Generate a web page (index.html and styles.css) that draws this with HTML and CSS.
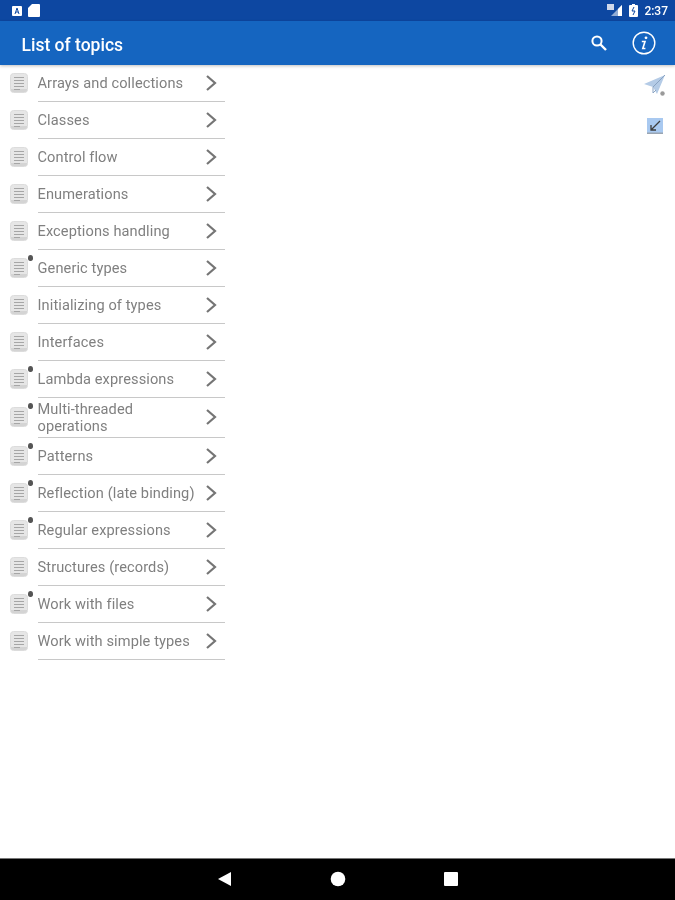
FILE: index.html
```html
<!DOCTYPE html>
<html>
<head>
  <title>List of topics</title>
  <link rel="stylesheet" href="styles.css">
</head>
<body>

<svg class="defs" width="0" height="0">
  <symbol id="doc" viewBox="0 0 18 20">
    <rect x="0.5" y="0.5" width="17" height="19" rx="3" fill="#e6e6e6" stroke="#dcdcdc"/>
    <path d="M4 4.5h10M4 7.5h10M4 10.5h10M4 13.5h10" stroke="#a6a6a6" stroke-width="1" fill="none"/>
    <path d="M1 16h16v1a2 2 0 0 1-2 2H3a2 2 0 0 1-2-2z" fill="#d4d4d4"/>
    <path d="M4 16.5h6" stroke="#a6a6a6" stroke-width="1" fill="none"/>
  </symbol>
  <symbol id="chevron" viewBox="0 0 12 18">
    <path d="M2 2l8 7-8 7" stroke="#757575" stroke-width="2.2" fill="none"/>
  </symbol>
</svg>

<div class="status-bar">
  <div class="status-left">
    <svg width="12" height="12" viewBox="0 0 12 12"><rect x="1" y="1" width="10" height="10" rx="1" fill="#fff"/><path d="M4 9l2-6 2 6M5 7h2" stroke="#0d47a1" stroke-width="1" fill="none"/></svg>
    <svg width="14" height="15" viewBox="0 0 14 15"><path d="M5 1h7a1 1 0 0 1 1 1v11a1 1 0 0 1-1 1H2a1 1 0 0 1-1-1V5z" fill="#fff"/></svg>
  </div>
  <div class="status-right">
    <svg width="16" height="13" viewBox="0 0 16 13"><path d="M15 1v11H4z" fill="#fff" opacity="0.55"/><path d="M15 1v11h-4V5z" fill="#fff"/><rect x="0" y="0" width="7" height="6" fill="#cfd8ea"/></svg>
    <svg width="9" height="13" viewBox="0 0 9 13"><path d="M3 0h3v1h2a1 1 0 0 1 1 1v10a1 1 0 0 1-1 1H1a1 1 0 0 1-1-1V2a1 1 0 0 1 1-1h2z" fill="#fff"/><path d="M5 3L3 7h3l-2 4" stroke="#0d47a1" stroke-width="1" fill="none"/></svg>
    <span class="clock">2:37</span>
  </div>
</div>

<header class="app-bar">
  <div class="title">List of topics</div>
  <div class="actions">
    <svg width="20" height="20" viewBox="0 0 20 20"><circle cx="8" cy="8" r="4.6" stroke="#fff" stroke-width="2" fill="none"/><path d="M11.5 11.5l5.5 5.5" stroke="#fff" stroke-width="2.4"/></svg>
    <svg width="24" height="24" viewBox="0 0 24 24"><circle cx="12" cy="12" r="10.8" stroke="#fff" stroke-width="1.4" fill="none"/><circle cx="14" cy="6.8" r="1.4" fill="#fff"/><path d="M9.8 10.5h3.2L10.8 17.5h2.6" stroke="#fff" stroke-width="1.6" fill="none"/></svg>
  </div>
</header>

<main class="content">
  <div class="topics">
    <div class="row"><svg class="doc"><use href="#doc"/></svg><span class="label">Arrays and collections</span><svg class="chevron"><use href="#chevron"/></svg></div>
    <div class="row"><svg class="doc"><use href="#doc"/></svg><span class="label">Classes</span><svg class="chevron"><use href="#chevron"/></svg></div>
    <div class="row"><svg class="doc"><use href="#doc"/></svg><span class="label">Control flow</span><svg class="chevron"><use href="#chevron"/></svg></div>
    <div class="row"><svg class="doc"><use href="#doc"/></svg><span class="label">Enumerations</span><svg class="chevron"><use href="#chevron"/></svg></div>
    <div class="row"><svg class="doc"><use href="#doc"/></svg><span class="label">Exceptions handling</span><svg class="chevron"><use href="#chevron"/></svg></div>
    <div class="row locked"><svg class="doc"><use href="#doc"/></svg><span class="label">Generic types</span><svg class="chevron"><use href="#chevron"/></svg></div>
    <div class="row"><svg class="doc"><use href="#doc"/></svg><span class="label">Initializing of types</span><svg class="chevron"><use href="#chevron"/></svg></div>
    <div class="row"><svg class="doc"><use href="#doc"/></svg><span class="label">Interfaces</span><svg class="chevron"><use href="#chevron"/></svg></div>
    <div class="row locked"><svg class="doc"><use href="#doc"/></svg><span class="label">Lambda expressions</span><svg class="chevron"><use href="#chevron"/></svg></div>
    <div class="row locked tall"><svg class="doc"><use href="#doc"/></svg><span class="label">Multi-threaded<br>operations</span><svg class="chevron"><use href="#chevron"/></svg></div>
    <div class="row locked"><svg class="doc"><use href="#doc"/></svg><span class="label">Patterns</span><svg class="chevron"><use href="#chevron"/></svg></div>
    <div class="row locked"><svg class="doc"><use href="#doc"/></svg><span class="label">Reflection (late binding)</span><svg class="chevron"><use href="#chevron"/></svg></div>
    <div class="row locked"><svg class="doc"><use href="#doc"/></svg><span class="label">Regular expressions</span><svg class="chevron"><use href="#chevron"/></svg></div>
    <div class="row"><svg class="doc"><use href="#doc"/></svg><span class="label">Structures (records)</span><svg class="chevron"><use href="#chevron"/></svg></div>
    <div class="row locked"><svg class="doc"><use href="#doc"/></svg><span class="label">Work with files</span><svg class="chevron"><use href="#chevron"/></svg></div>
    <div class="row"><svg class="doc"><use href="#doc"/></svg><span class="label">Work with simple types</span><svg class="chevron"><use href="#chevron"/></svg></div>
  </div>
  <div class="side-tools">
    <svg width="24" height="24" viewBox="0 0 24 24"><path d="M1 10L22 1 14 20 10 13z" fill="#b4cbe6"/><path d="M10 13L22 1M10 13v6l3-3" stroke="#8aa3c2" stroke-width="1" fill="none"/><circle cx="19.5" cy="19.5" r="2.2" fill="#9a9a9a"/></svg>
    <svg width="16" height="16" viewBox="0 0 16 16"><rect width="16" height="16" fill="#a9c9f0"/><path d="M13 3L4 12M4 7v5h5" stroke="#3d3d3d" stroke-width="1.3" fill="none"/><rect y="14.5" width="16" height="1.5" fill="#9aa5b2"/></svg>
  </div>
</main>

<div class="nav-bar">
  <svg width="16" height="16" viewBox="0 0 16 16"><path d="M1 8l13-7v14z" fill="#fff"/></svg>
  <svg width="16" height="16" viewBox="0 0 16 16"><circle cx="8" cy="8" r="7.3" fill="#fff"/></svg>
  <svg width="16" height="16" viewBox="0 0 16 16"><rect x="1" y="1" width="14" height="14" rx="1" fill="#fff"/></svg>
</div>

</body>
</html>
```

FILE: styles.css
```css
body {
  font-family: Roboto, "Liberation Sans", sans-serif;
  background-color: white;
  margin: 0;
  height: 900px;
  display: flex;
  flex-direction: column;
  overflow: hidden;
  filter: blur(0.4px);
}
.defs {
  position: absolute;
}
.status-bar {
  height: 21px;
  background-color: #0d47a1;
  color: white;
  display: flex;
  justify-content: space-between;
  align-items: center;
  padding: 0 7px 0 11px;
}
.status-left, .status-right {
  display: flex;
  align-items: center;
}
.status-left {
  gap: 4px;
}
.status-right {
  gap: 6px;
}
.clock {
  font-size: 12px;
  font-weight: 500;
}
.app-bar {
  height: 44px;
  background-color: #1565c0;
  color: white;
  display: flex;
  justify-content: space-between;
  align-items: center;
  padding: 0 19px 0 21.5px;
  box-shadow: 0 1px 3px rgba(0,0,0,0.25);
  position: relative;
}
.title {
  font-size: 17.5px;
  font-weight: 500;
  padding-top: 3px;
}
.actions {
  display: flex;
  align-items: center;
  gap: 23px;
}
.content {
  flex: 1;
  display: flex;
  justify-content: space-between;
}
.topics {
  width: 225px;
}
.row {
  height: 37px;
  box-sizing: border-box;
  display: flex;
  align-items: center;
  padding-left: 9.5px;
  position: relative;
}
.row::after {
  content: "";
  position: absolute;
  left: 38px;
  right: 0;
  bottom: 0;
  height: 1px;
  background-color: #c8c8c8;
}
.row.tall {
  height: 40px;
}
.row.locked::before {
  content: "";
  position: absolute;
  left: 28px;
  top: 5px;
  width: 5px;
  height: 6px;
  border-radius: 50% 50% 45% 45%;
  background-color: #555;
}
.doc {
  width: 18px;
  height: 20px;
  flex-shrink: 0;
  margin-bottom: 2px;
}
.label {
  flex: 1;
  margin-left: 10px;
  font-size: 14.6px;
  line-height: 17px;
  letter-spacing: 0.1px;
  color: #808080;
}
.chevron {
  width: 12px;
  height: 18px;
  margin-right: 8px;
  flex-shrink: 0;
  margin-bottom: 2px;
}
.side-tools {
  display: flex;
  flex-direction: column;
  align-items: center;
  gap: 20px;
  padding: 9px 8px 0 0;
}
.nav-bar {
  height: 42px;
  box-sizing: border-box;
  border-top: 1px solid #777;
  padding-bottom: 1px;
  background-color: black;
  display: flex;
  justify-content: center;
  align-items: center;
  gap: 97px;
}
```
